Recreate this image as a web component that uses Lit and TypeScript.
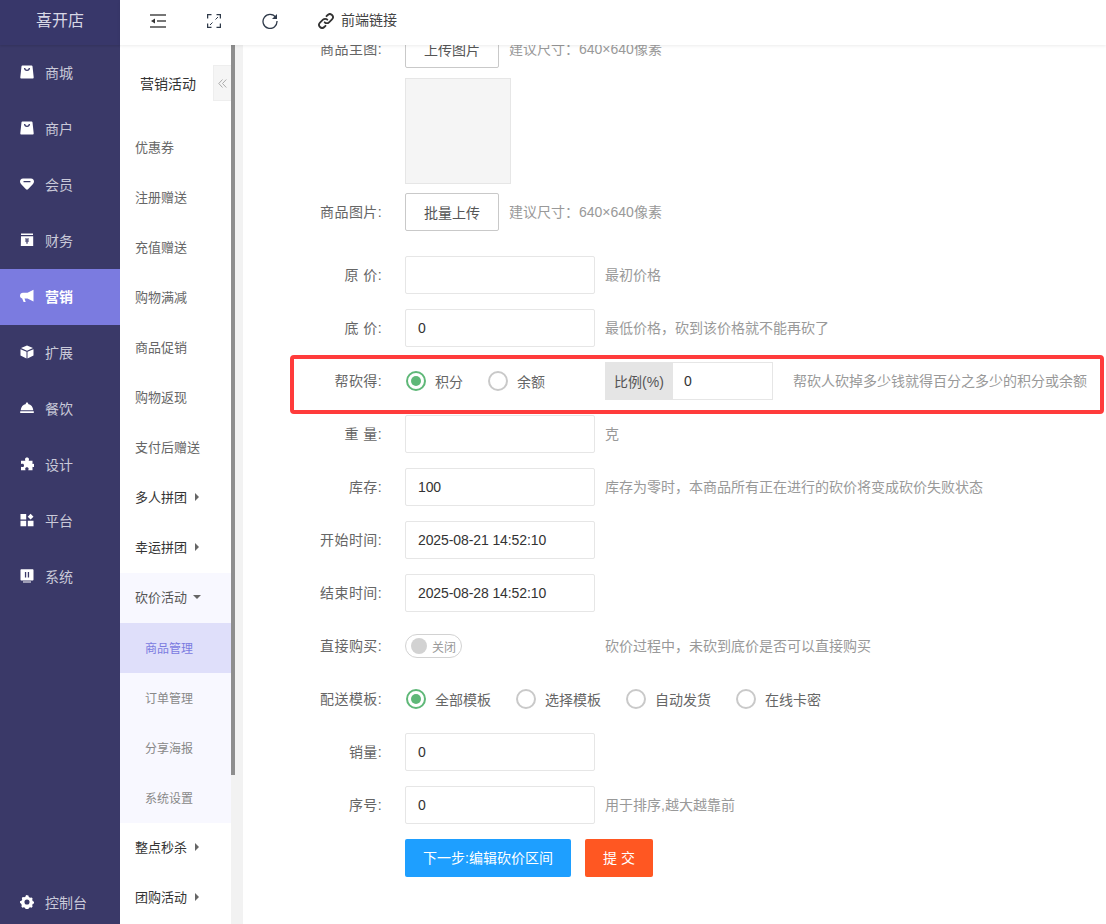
import { LitElement, html, css, svg } from "lit";
import { customElement } from "lit/decorators.js";

const bag = svg`<path fill="#fff" d="M2.400 .5h9.200c.5 0 .8.300.9.800l1.200 10.900c.1.700-.4 1.300-1.100 1.300H1.400c-.7 0-1.200-.6-1.100-1.300L1.500 1.300c.1-.5.400-.8.900-.8z"/><path fill="none" stroke="#3a3968" stroke-width="1.300" d="M4.600 3c.2 3.200 4.600 3.200 4.800 0"/>`;
const navIcons: Record<string, unknown> = {
  bag,
  gem: svg`<path fill="#fff" d="M3 1.500h8c2 0 3 1.500 3 3 0 1-.4 1.800-1 2.400L8 12.300c-.6.500-1.400.5-2 0L1 6.900C.4 6.300 0 5.500 0 4.500c0-1.500 1-3 3-3z"/><path fill="none" stroke="#3a3968" stroke-width="1.200" stroke-linecap="round" d="M4 4.700h6"/>`,
  box: svg`<path fill="#fff" d="M1 .5h12V2H1zM1 3.200h12.200v9.800H.8z"/><path fill="#3a3968" d="M5 5.500h4v1H7.600v1H9v1H7.600v2.200H6.400V8.500H5v-1h1.400v-1H5z"/>`,
  horn: svg`<path fill="#fff" d="M13.500 .8v11.600L7.500 9.600H4.500l1.200 3.400H3.600L2.200 9.500C.8 9.200 0 8 0 6.800 0 5 1.300 3.800 3 3.800h4.500z"/>`,
  cube: svg`<path fill="#fff" d="M7 .5l6 2.600L7 5.700 1 3.100zM.5 4.200l6 2.600v6.700l-6-2.900zM13.500 4.200v6.400l-6 2.900V6.800z"/>`,
  dish: svg`<path fill="#fff" d="M7 1.500c.7 0 1.200.4 1.200 1l-.1.500c3 .6 4.900 3 5.200 6.200H.7C1 6 2.900 3.600 5.900 3l-.1-.5c0-.6.5-1 1.200-1zM.2 10.300h13.600V12H.2z"/>`,
  puzzle: svg`<path fill="#fff" d="M5 2.300C5 1 6 .5 7 .5s2 .5 2 1.800c0 .6-.3 1-.3 1.500h3.800V7c.4 0 .8-.3 1.300-.3 1 0 1.500.8 1.500 1.700s-.5 1.700-1.500 1.700c-.5 0-.9-.3-1.300-.3v3.400H8.300c0-.5.3-.9.3-1.400 0-1-.8-1.500-1.700-1.500s-1.700.5-1.700 1.500c0 .5.3.9.3 1.400H1V9.700c.5 0 1 .3 1.500.3C3.400 10 4 9.300 4 8.400S3.400 6.800 2.500 6.800C2 6.800 1.500 7 1 7V3.800h4.300c0-.5-.3-1-.3-1.500z"/>`,
  grid: svg`<path fill="#fff" d="M.5 1h5.700v5.500H.5zM.5 7.800h5.700v5.500H.5zM7.800 7.800h5.700v5.500H7.800zM10.600.8l2.900 2.900-2.900 2.900-2.900-2.900z"/>`,
  screen: svg`<path fill="#fff" d="M1.500 .2h11c.6 0 1 .4 1 1v9.300c0 .6-.4 1-1 1h-11c-.6 0-1-.4-1-1V1.200c0-.6.4-1 1-1zM3 12.600h8v1H3z"/><path fill="#3a3968" d="M4.900 3h1.300v5.500H4.900zM7.800 3h1.300v5.500H7.800z"/>`,
  gear: svg`<path fill="#fff" fill-rule="evenodd" d="M7 .3l1.400.3.4 1.500 1.300.7 1.500-.4 1 1.100-.4 1.500.7 1.300 1.500.5v1.500l-1.500.5-.7 1.300.4 1.500-1 1.100-1.500-.4-1.300.7-.4 1.500-1.400.3-1.400-.3-.4-1.500-1.300-.7-1.500.4-1-1.100.4-1.500-.7-1.300L0 7.800V6.300l1.500-.5.7-1.300-.4-1.500 1-1.100 1.500.4 1.300-.7.4-1.500zM7 4.500a2.500 2.500 0 100 5.100 2.500 2.500 0 000-5.100z"/>`,
};

const navItems = [
  ["bag", "商城"], ["bag", "商户"], ["gem", "会员"], ["box", "财务"], ["horn", "营销", true],
  ["cube", "扩展"], ["dish", "餐饮"], ["puzzle", "设计"], ["grid", "平台"], ["screen", "系统"],
] as [string, string, boolean?][];

const plainMenu = ["优惠券", "注册赠送", "充值赠送", "购物满减", "商品促销", "购物返现", "支付后赠送"];

@customElement("app-root")
export class AppRoot extends LitElement {
  static styles = css`
    :host { display: block; width: 100%; height: 100vh; overflow: hidden; font-family: "Liberation Sans", "Noto Sans CJK SC", sans-serif; font-size: 14px; color: #333; background: #fff; }
    * { box-sizing: border-box; }
    .shell { display: flex; height: 100%; }
    .nav { width: 120px; flex: none; background: #3a3968; color: #c9c9d8; display: flex; flex-direction: column; }
    .logo { height: 45px; display: flex; align-items: center; justify-content: center; padding-bottom: 8px; font-size: 16px; color: #d8d8e6; background: #38376a; box-shadow: 0 1px 2px rgba(0,0,0,.12); }
    .nav-item { height: 56px; display: flex; align-items: center; padding-left: 20px; padding-bottom: 2px; gap: 11px; }
    .nav-item svg { width: 14px; height: 14px; flex: none; }
    .nav-item.on { background: #7b7be0; color: #fff; font-weight: 700; }
    .nav-bottom { margin-top: auto; height: 42px; }
    .right { flex: 1; min-width: 0; display: flex; flex-direction: column; }
    .top { height: 45px; flex: none; display: flex; align-items: center; padding-bottom: 7px; background: #fff; box-shadow: 0 1px 3px rgba(0,0,0,.08); position: relative; z-index: 2; color: #444; }
    .top svg { flex: none; margin-top: 3px; }
    .t1 { width: 16px; height: 14px; margin-left: 30px; }
    .t2 { width: 14px; height: 14px; margin-left: 41px; }
    .t3 { width: 16px; height: 16px; margin-left: 41px; }
    .t4 { width: 16px; height: 16px; margin-left: 40px; margin-right: 7px; }
    .body { flex: 1; min-height: 0; display: flex; }
    .side { width: 111px; flex: none; position: relative; font-size: 13px; }
    .side-title { height: 78px; display: flex; align-items: center; padding: 0 0 2px 20px; color: #333; font-size: 14px; }
    .collapse { position: absolute; right: 0; top: 20px; width: 18px; height: 36px; background: #f5f5f5; border: 1px solid #eee; border-right: none; display: flex; align-items: center; justify-content: center; }
    .m { height: 50px; display: flex; align-items: center; padding: 0 0 4px 15px; color: #666; }
    .m.dark { color: #333; }
    .m.open { background: #f8f8ff; color: #555; }
    .sub { height: 50px; display: flex; align-items: center; padding: 0 0 2px 25px; background: #f8f8ff; color: #888; font-size: 12px; }
    .sub.on { background: #dfdffa; color: #7b7be0; }
    .caret-r { margin-left: 8px; width: 0; height: 0; margin-top: 2px; border-left: 4px solid #666; border-top: 4px solid transparent; border-bottom: 4px solid transparent; }
    .caret-d { margin-left: 6px; width: 0; height: 0; border-top: 4px solid #666; border-left: 4px solid transparent; border-right: 4px solid transparent; margin-top: 2px; }
    .track { width: 12px; flex: none; background: #f2f2f2; }
    .thumb { width: 4px; height: 730px; background: #8e8e8e; }
    .main { flex: 1; min-width: 0; overflow: hidden; position: relative; background: #fff; }
    .form { margin-top: -15px; padding-left: 62px; }
    .row { display: flex; align-items: center; height: 38px; margin-bottom: 15px; }
    .label { width: 77px; margin-right: 23px; padding-bottom: 2px; text-align: right; color: #666; flex: none; white-space: nowrap; letter-spacing: .4px; }
    .input { width: 190px; height: 38px; border: 1px solid #e6e6e6; border-radius: 2px; padding: 0 12px; display: flex; align-items: center; color: #333; flex: none; background: #fff; letter-spacing: -.1px; }
    .help { margin-left: 10px; padding-bottom: 2px; color: #999; white-space: nowrap; }
    .btn { height: 38px; width: 94px; border: 1px solid #c9c9c9; border-radius: 2px; display: flex; align-items: center; justify-content: center; color: #555; flex: none; background: #fff; }
    .thumbnail-row { padding-left: 100px; margin: -5px 0 9px; }
    .pic { width: 106px; height: 106px; background: #f5f5f5; border: 1px solid #e6e6e6; }
    .upload-last { margin-bottom: 25px; }
    .radio { display: flex; align-items: center; margin-right: 25px; color: #666; flex: none; }
    .dot { width: 20px; height: 20px; border-radius: 50%; border: 2px solid #c9c9c9; margin-right: 9px; background: #fff; position: relative; }
    .dot.on { border-color: #5fb878; }
    .dot.on::after { content: ""; position: absolute; inset: 3px; border-radius: 50%; background: #5fb878; }
    .radios { display: flex; align-items: center; padding-left: 1px; }
    .group { display: flex; height: 38px; margin-left: 35px; margin-right: 20px; flex: none; }
    .addon { width: 68px; background: #e5e5e5; color: #555; display: flex; align-items: center; justify-content: center; }
    .group-input { width: 100px; border: 1px solid #e6e6e6; border-left: none; padding: 0 11px; display: flex; align-items: center; }
    .group + .help { margin-left: 0; }
    .mark { position: absolute; left: 47px; top: 310px; width: 814px; height: 59px; border: 4px solid #ff3b3b; border-radius: 4px; }
    .switch { width: 57px; height: 24px; border: 1px solid #d2d2d2; border-radius: 12px; display: flex; align-items: center; padding-left: 5px; gap: 5px; font-size: 12px; color: #999; flex: none; }
    .knob { width: 16px; height: 16px; border-radius: 50%; background: #d2d2d2; flex: none; }
    .spacer { width: 190px; flex: none; }
    .actions { display: flex; gap: 14px; padding-left: 100px; }
    .primary, .submit { height: 38px; padding-bottom: 2px; border-radius: 2px; color: #fff; display: flex; align-items: center; justify-content: center; }
    .primary { width: 166px; background: #1e9fff; }
    .submit { width: 68px; background: #ff5722; }
  `;

  private ic(name: string) {
    return html`<svg viewBox="0 0 14 14">${navIcons[name]}</svg>`;
  }

  private row(label: string, value = "", help = "") {
    return html`<div class="row"><span class="label">${label}</span><div class="input">${value}</div>${help ? html`<span class="help">${help}</span>` : ""}</div>`;
  }

  private radio(text: string, on = false) {
    return html`<span class="radio"><span class="dot ${on ? "on" : ""}"></span>${text}</span>`;
  }

  render() {
    return html`<div class="shell">
      <aside class="nav">
        <div class="logo">喜开店</div>
        ${navItems.map(([i, t, on]) => html`<div class="nav-item ${on ? "on" : ""}">${this.ic(i)}<span>${t}</span></div>`)}
        <div class="nav-item nav-bottom">${this.ic("gear")}<span>控制台</span></div>
      </aside>
      <div class="right">
        <header class="top">
          <svg class="t1" viewBox="0 0 16 14" fill="none" stroke="#4a4a4a" stroke-width="1.500"><path d="M0 1h16M7 7h9M0 13h16"/><path d="M5 4.500V9.500L1 7z" fill="#333" stroke="none"/></svg>
          <svg class="t2" viewBox="0 0 14 14" fill="none" stroke="#2f3a4a" stroke-width="1.300"><path d="M.6 4.500V.6h3.900M9.500.6h3.900v3.900M13.400 9.500v3.900H9.500M4.500 13.400H.6V9.500"/><path d="M8.500 5.500l2.500-2.500M5.500 8.500L3 11" stroke-width="1"/></svg>
          <svg class="t3" viewBox="0 0 16 16" fill="none" stroke="#2f3a4a" stroke-width="1.300"><path d="M13.800 4.500A7 7 0 1015 8"/><path d="M15 1v5h-5z" stroke="none" fill="#2f3a4a"/></svg>
          <svg class="t4" viewBox="0 0 16 16" fill="none" stroke="#333" stroke-width="1.800" stroke-linecap="round"><path d="M6.700 9.300a3 3 0 004.300 0l3-3a3 3 0 00-4.300-4.300L8.500 3.200"/><path d="M9.300 6.700a3 3 0 00-4.300 0l-3 3a3 3 0 004.300 4.300l1.200-1.200"/></svg>
          <span>前端链接</span>
        </header>
        <div class="body">
          <nav class="side">
            <div class="side-title">营销活动</div>
            <div class="collapse"><svg width="9" height="9" viewBox="0 0 9 9" fill="none" stroke="#aaa"><path d="M4.500 .5L.8 4.500l3.700 4M8.300 .5L4.500 4.500l3.800 4"/></svg></div>
            ${plainMenu.map((t) => html`<div class="m">${t}</div>`)}
            <div class="m dark">多人拼团<i class="caret-r"></i></div>
            <div class="m dark">幸运拼团<i class="caret-r"></i></div>
            <div class="m open">砍价活动<i class="caret-d"></i></div>
            <div class="sub on">商品管理</div>
            <div class="sub">订单管理</div>
            <div class="sub">分享海报</div>
            <div class="sub">系统设置</div>
            <div class="m dark">整点秒杀<i class="caret-r"></i></div>
            <div class="m dark">团购活动<i class="caret-r"></i></div>
          </nav>
          <div class="track"><div class="thumb"></div></div>
          <main class="main">
            <div class="form">
              <div class="row"><span class="label">商品主图:</span><div class="btn">上传图片</div><span class="help">建议尺寸：640×640像素</span></div>
              <div class="thumbnail-row"><div class="pic"></div></div>
              <div class="row upload-last"><span class="label">商品图片:</span><div class="btn">批量上传</div><span class="help">建议尺寸：640×640像素</span></div>
              ${this.row("原 价:", "", "最初价格")}
              ${this.row("底 价:", "0", "最低价格，砍到该价格就不能再砍了")}
              <div class="row"><span class="label">帮砍得:</span>
                <div class="radios">${this.radio("积分", true)}${this.radio("余额")}</div>
                <div class="group"><div class="addon">比例(%)</div><div class="group-input">0</div></div>
                <span class="help">帮砍人砍掉多少钱就得百分之多少的积分或余额</span>
              </div>
              ${this.row("重 量:", "", "克")}
              ${this.row("库存:", "100", "库存为零时，本商品所有正在进行的砍价将变成砍价失败状态")}
              ${this.row("开始时间:", "2025-08-21 14:52:10")}
              ${this.row("结束时间:", "2025-08-28 14:52:10")}
              <div class="row"><span class="label">直接购买:</span><div class="spacer"><div class="switch"><span class="knob"></span>关闭</div></div><span class="help">砍价过程中，未砍到底价是否可以直接购买</span></div>
              <div class="row"><span class="label">配送模板:</span><div class="radios">${this.radio("全部模板", true)}${this.radio("选择模板")}${this.radio("自动发货")}${this.radio("在线卡密")}</div></div>
              ${this.row("销量:", "0")}
              ${this.row("序号:", "0", "用于排序,越大越靠前")}
              <div class="actions"><div class="primary">下一步:编辑砍价区间</div><div class="submit">提 交</div></div>
            </div>
            <div class="mark"></div>
          </main>
        </div>
      </div>
    </div>`;
  }
}
